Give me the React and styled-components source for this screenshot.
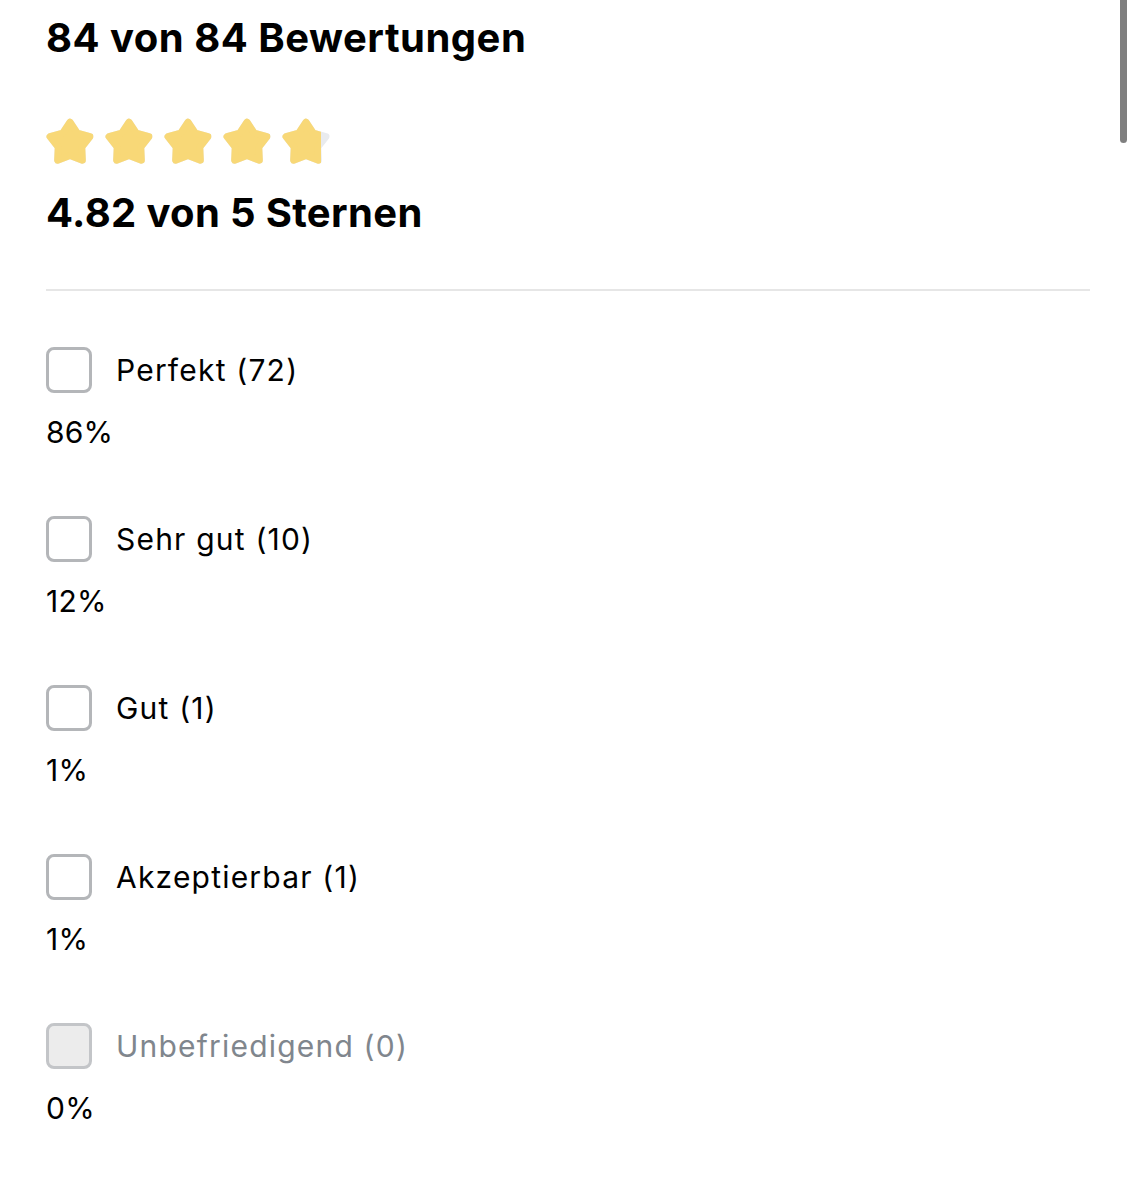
import React from 'react';
import styled, { createGlobalStyle } from 'styled-components';

const ratings = [
  { label: 'Perfekt', count: 72, percent: 86 },
  { label: 'Sehr gut', count: 10, percent: 12 },
  { label: 'Gut', count: 1, percent: 1 },
  { label: 'Akzeptierbar', count: 1, percent: 1 },
  { label: 'Unbefriedigend', count: 0, percent: 0 },
];

const average = 4.82;

// chunky five point star, the round stroke joins soften the tips
const STAR_PATH =
  'M12 3.5L15.12 8.21 20.56 9.72 17.04 14.14 17.29 19.78 12 17.8 6.71 19.78 6.96 14.14 3.44 9.72 8.88 8.21Z';

function Star ({ fill, id }) {
  // fill: 0..1 share of the star that is yellow
  const w = 1.94 + 20.12 * fill;
  return (
    <StarSvg viewBox='0 0 24 24'>
      <defs>
        <clipPath id={id}>
          <rect x='0' y='0' width={w} height='24' />
        </clipPath>
      </defs>
      <path d={STAR_PATH} fill='#e9ebee' stroke='#e9ebee' strokeWidth='3' strokeLinejoin='round' />
      <path
        d={STAR_PATH}
        fill='#f8d877'
        stroke='#f8d877'
        strokeWidth='3'
        strokeLinejoin='round'
        clipPath={`url(#${id})`}
      />
    </StarSvg>
  );
}

export default function App () {
  const stars = [0, 1, 2, 3, 4].map(i => Math.max(0, Math.min(1, average - i)));

  return (
    <>
      <GlobalStyle />
      <Page>
        <Title>84 von 84 Bewertungen</Title>
        <StarRow>
          {stars.map((f, i) => (
            <Star key={i} fill={f} id={`star-clip-${i}`} />
          ))}
        </StarRow>
        <Average>{average} von 5 Sternen</Average>
        <Divider />
        <List>
          {ratings.map(r => {
            const disabled = r.count === 0;
            return (
              <Item key={r.label}>
                <CheckRow>
                  <Box disabled={disabled} />
                  <Label disabled={disabled}>
                    {r.label} ({r.count})
                  </Label>
                </CheckRow>
                <Percent>{r.percent}%</Percent>
              </Item>
            );
          })}
        </List>
        <ScrollThumb />
      </Page>
    </>
  );
}

const GlobalStyle = createGlobalStyle`
  body {
    margin: 0;
    background: #ffffff;
    font-family: Inter, "Noto Sans", "Liberation Sans", sans-serif;
    color: #000000;
  }
`;

const Page = styled.div`
  position: relative;
  width: 1137px;
  min-height: 1200px;
  box-sizing: border-box;
  padding: 14px 47px 0 46px;
  overflow: hidden;
`;

const Title = styled.h1`
  margin: 0;
  font-size: 40px;
  line-height: 48px;
  font-weight: 700;
  letter-spacing: 0.5px;
`;

const StarRow = styled.div`
  display: flex;
  gap: 3px;
  margin-top: 52px;
  margin-left: -4.5px;
`;

const StarSvg = styled.svg`
  width: 56px;
  height: 56px;
  flex-shrink: 0;
`;

const Average = styled.h2`
  margin: 19px 0 0;
  font-size: 40px;
  line-height: 48px;
  font-weight: 700;
  letter-spacing: 0.35px;
`;

const Divider = styled.hr`
  margin: 52px 0 0;
  border: none;
  height: 2px;
  background: #e6e6e6;
`;

const List = styled.div`
  display: flex;
  flex-direction: column;
  gap: 64px;
  margin-top: 56px;
`;

const Item = styled.div`
  display: flex;
  flex-direction: column;
  gap: 19px;
`;

const CheckRow = styled.div`
  display: flex;
  align-items: center;
  gap: 24px;
  height: 46px;
`;

const Box = styled.span`
  width: 46px;
  height: 46px;
  box-sizing: border-box;
  border: 3px solid ${p => (p.disabled ? '#c3c5c8' : '#b4b6b9')};
  border-radius: 8px;
  background: ${p => (p.disabled ? '#ececec' : '#ffffff')};
  flex-shrink: 0;
`;

const Label = styled.span`
  font-size: 30px;
  line-height: 46px;
  font-weight: 400;
  letter-spacing: 1.2px;
  color: ${p => (p.disabled ? '#80868d' : '#000000')};
`;

const Percent = styled.div`
  font-size: 30px;
  line-height: 40px;
  font-weight: 400;
  letter-spacing: 0.2px;
`;

const ScrollThumb = styled.div`
  position: absolute;
  top: -6px;
  right: 10px;
  width: 7px;
  height: 149px;
  border-radius: 4px;
  background: #7f7f7f;
`;
